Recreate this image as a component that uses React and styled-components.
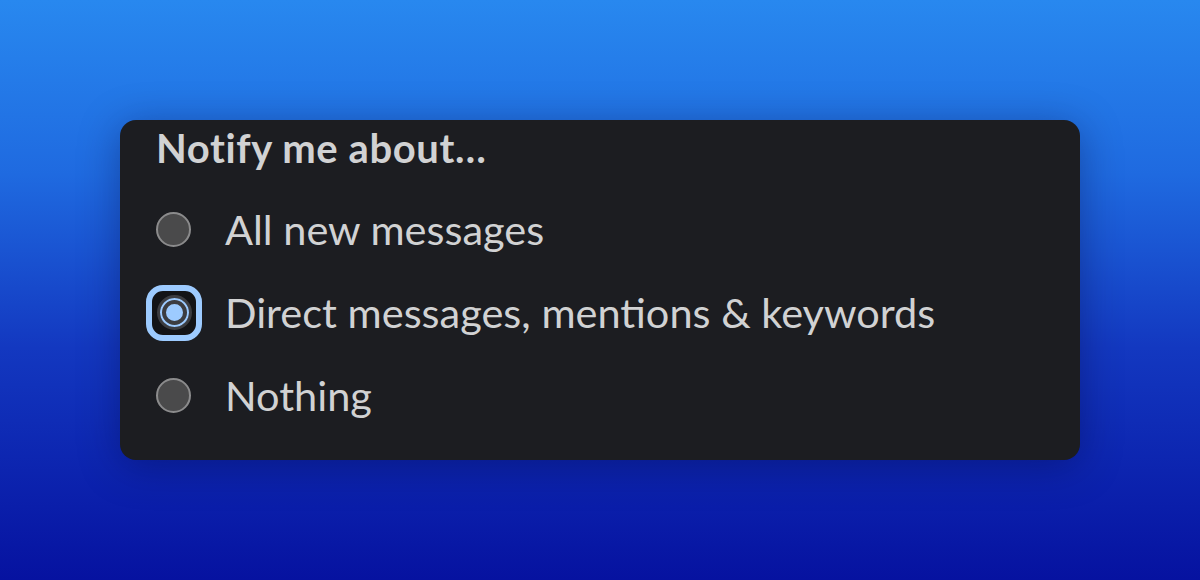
import React, { useState } from 'react'
import styled, { createGlobalStyle } from 'styled-components'

const GlobalStyle = createGlobalStyle`
  html, body {
    margin: 0;
    padding: 0;
  }
  body {
    font-family: Lato, "Noto Sans", "Liberation Sans", sans-serif;
  }
`

const options = [
  { id: 'all', label: 'All new messages' },
  { id: 'mentions', label: 'Direct messages, mentions & keywords' },
  { id: 'nothing', label: 'Nothing' },
]

const App = () => {
  const [selected] = useState('mentions')

  return (
    <>
      <GlobalStyle />
      <Page>
        <Card>
          <Title>Notify me about…</Title>
          <OptionList>
            {options.map((option) => (
              <Option key={option.id}>
                <RadioSlot>
                  {option.id === selected ? (
                    <FocusRing>
                      <Radio checked />
                    </FocusRing>
                  ) : (
                    <Radio />
                  )}
                </RadioSlot>
                <Label>{option.label}</Label>
              </Option>
            ))}
          </OptionList>
        </Card>
      </Page>
    </>
  )
}

const Page = styled.div`
  width: 1200px;
  height: 580px;
  display: flex;
  align-items: flex-start;
  justify-content: center;
  padding-top: 120px;
  box-sizing: border-box;
  background: linear-gradient(180deg, #2888ef 0%, #1f6ae0 30%, #1338c0 60%, #0612a0 100%);
  overflow: hidden;
`

const Card = styled.div`
  width: 960px;
  height: 340px;
  box-sizing: border-box;
  padding: 4px 36px 0;
  background: #1c1d21;
  border-radius: 16px;
  box-shadow: 0 6px 40px rgba(0, 0, 50, 0.35);
  display: flex;
  flex-direction: column;
`

const Title = styled.h2`
  margin: 0;
  font-size: 40px;
  line-height: 1.2;
  font-weight: 700;
  letter-spacing: 0.6px;
  color: #d1d2d3;
`

const OptionList = styled.div`
  display: flex;
  flex-direction: column;
  margin-top: 16px;
`

const Option = styled.label`
  height: 83px;
  display: flex;
  align-items: center;
  gap: 33px;
`

const RadioSlot = styled.div`
  width: 36px;
  height: 36px;
  position: relative;
  flex-shrink: 0;
`

const FocusRing = styled.div`
  position: absolute;
  left: -10px;
  top: -10px;
  width: 56px;
  height: 56px;
  box-sizing: border-box;
  border: 6px solid #9dcbff;
  border-radius: 17px;
  background: #131417;
  display: flex;
  align-items: center;
  justify-content: center;
`

const Radio = styled.span`
  display: block;
  width: 35px;
  height: 35px;
  box-sizing: border-box;
  border-radius: 50%;
  border: ${(p) => (p.checked ? '3px solid #3c3d41' : '2px solid #8b8b8c')};
  background: ${(p) => (p.checked ? '#9dcbff' : '#4a4a4b')};
  box-shadow: ${(p) =>
    p.checked ? 'inset 0 0 0 2px #9dcbff, inset 0 0 0 6px #3c3d41' : 'none'};
`

const Label = styled.span`
  font-size: 41.5px;
  line-height: 1.2;
  color: #d1d2d3;
  white-space: nowrap;
`

export default App
